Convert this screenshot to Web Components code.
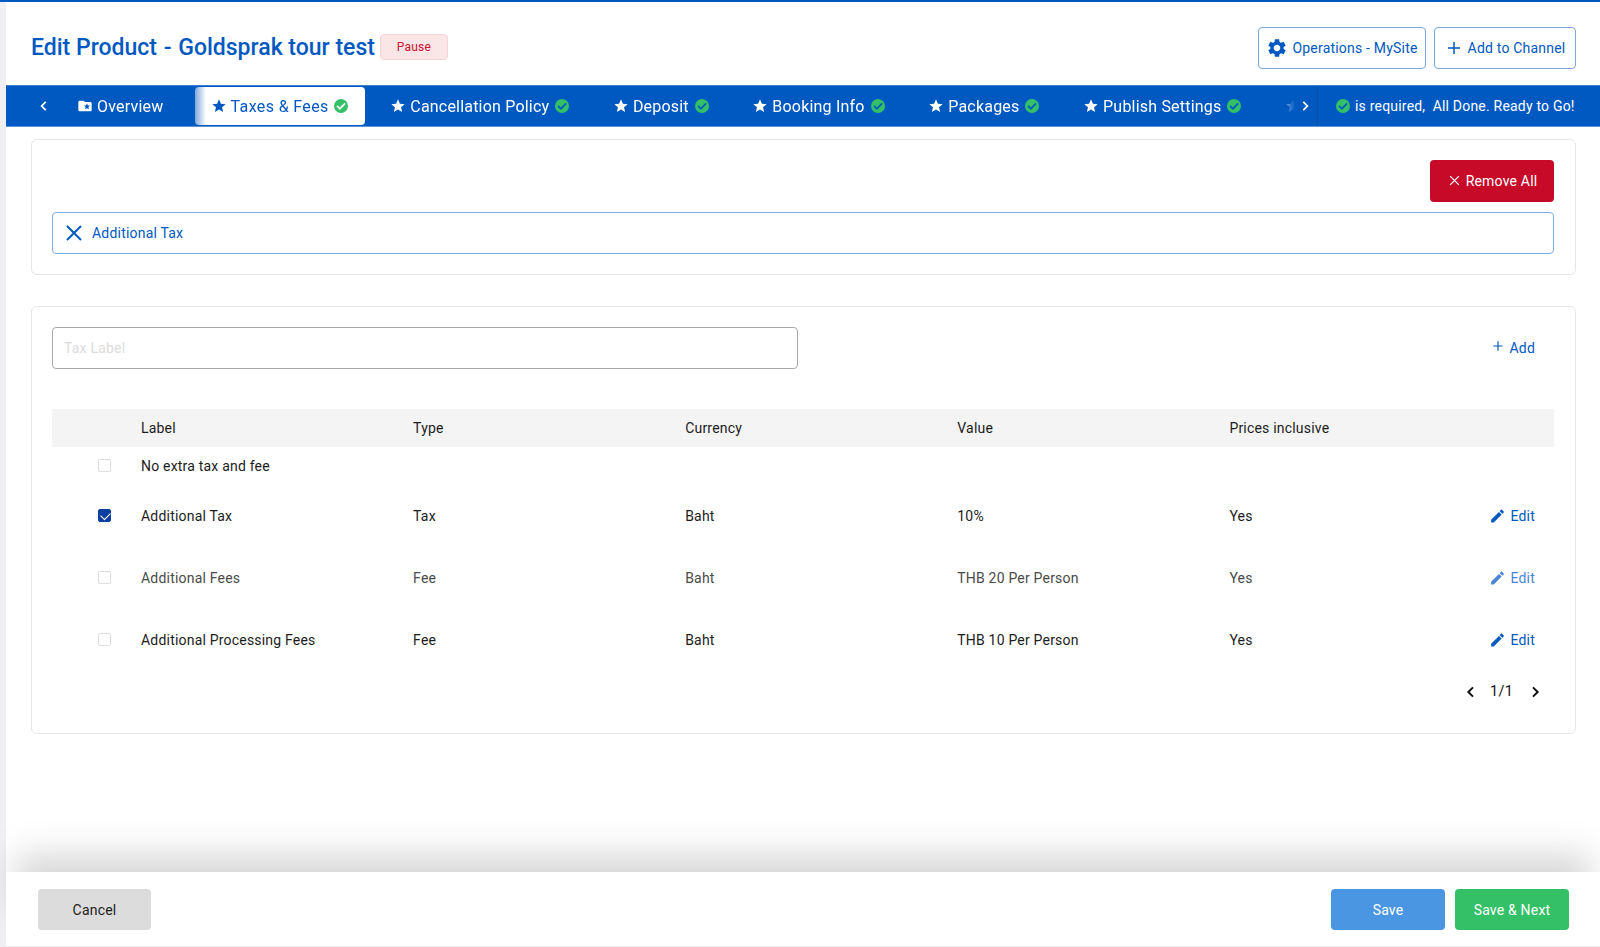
<!DOCTYPE html>
<html lang="en">
<head>
<meta charset="utf-8">
<title>Edit Product</title>
<style>
  * { box-sizing: border-box; }
  html, body { height: 100%; }
  body {
    margin: 0;
    height: 947px;
    overflow: hidden;
    border-top: 2px solid #0059c1;
    background: #f0f0f3;
    font-family: Roboto, "Liberation Sans", sans-serif;
    letter-spacing: .2px;
    color: #1c1c1c;
  }
</style>
</head>
<body>
<edit-page>
  <page-header slot="header" heading="Edit Product - Goldsprak tour test" status="Pause">
    <ui-button variant="outline" icon="gear" style="--w:168px">Operations - MySite</ui-button>
    <ui-button variant="outline" icon="plus" style="--w:142px">Add to Channel</ui-button>
  </page-header>

  <tab-bar slot="tabs" status="is required,&nbsp; All Done. Ready to Go!">
    <tab-item icon="folder" nocheck>Overview</tab-item>
    <tab-item active>Taxes &amp; Fees</tab-item>
    <tab-item>Cancellation Policy</tab-item>
    <tab-item>Deposit</tab-item>
    <tab-item>Booking Info</tab-item>
    <tab-item>Packages</tab-item>
    <tab-item>Publish Settings</tab-item>
    <tab-item nocheck></tab-item>
  </tab-bar>

  <ui-card style="--mt:12px">
    <div style="display:flex;justify-content:flex-end;margin-bottom:10px">
      <ui-button variant="danger" icon="close" style="--w:124px">Remove All</ui-button>
    </div>
    <chosen-tag>Additional Tax</chosen-tag>
  </ui-card>

  <ui-card style="--mt:31px">
    <tax-form placeholder="Tax Label"></tax-form>
    <tax-row head><span>Label</span><span>Type</span><span>Currency</span><span>Value</span><span>Prices inclusive</span></tax-row>
    <tax-row compact noedit><span>No extra tax and fee</span></tax-row>
    <tax-row checked><span>Additional Tax</span><span>Tax</span><span>Baht</span><span>10%</span><span>Yes</span></tax-row>
    <tax-row muted><span>Additional Fees</span><span>Fee</span><span>Baht</span><span>THB 20 Per Person</span><span>Yes</span></tax-row>
    <tax-row><span>Additional Processing Fees</span><span>Fee</span><span>Baht</span><span>THB 10 Per Person</span><span>Yes</span></tax-row>
    <table-pager>1/1</table-pager>
  </ui-card>

  <page-footer slot="footer">
    <ui-button slot="left" variant="grey" style="--w:113px;--h:41px">Cancel</ui-button>
    <ui-button variant="blue" style="--w:114px;--h:41px">Save</ui-button>
    <ui-button variant="green" style="--w:114px;--h:41px">Save &amp; Next</ui-button>
  </page-footer>
</edit-page>

<script>
const ICONS = {
  star: '<path d="M12 17.27L18.18 21l-1.64-6.97L22 9.24l-7.19-.61L12 2 9.19 8.63 2 9.24l5.46 4.73L5.82 21z"/>',
  folder: '<path d="M20 6h-8l-2-2H4c-1.1 0-1.99.9-1.99 2L2 18c0 1.1.9 2 2 2h16c1.1 0 2-.9 2-2V8c0-1.1-.9-2-2-2zm-2.06 11L15 15.28 12.06 17l.78-3.33-2.59-2.24 3.41-.29L15 8l1.34 3.13 3.41.29-2.59 2.24.78 3.34z"/>',
  check: '<path fill-rule="evenodd" d="M12 1.5a10.5 10.5 0 1 0 0 21 10.5 10.5 0 0 0 0-21zM10.3 17.9l-5.2-5.2 1.9-1.9 3.3 3.3 6.9-6.9 1.9 1.9z"/>',
  gear: '<path d="M19.14 12.94c.04-.3.06-.61.06-.94 0-.32-.02-.64-.07-.94l2.03-1.58c.18-.14.23-.41.12-.61l-1.92-3.32c-.12-.22-.37-.29-.59-.22l-2.39.96c-.5-.38-1.03-.7-1.62-.94l-.36-2.54c-.04-.24-.24-.41-.48-.41h-3.84c-.24 0-.43.17-.47.41l-.36 2.54c-.59.24-1.13.57-1.62.94l-2.39-.96c-.22-.08-.47 0-.59.22L2.74 8.87c-.12.21-.08.47.12.61l2.03 1.58c-.05.3-.09.63-.09.94s.02.64.07.94l-2.03 1.58c-.18.14-.23.41-.12.61l1.92 3.32c.12.22.37.29.59.22l2.39-.96c.5.38 1.03.7 1.62.94l.36 2.54c.05.24.24.41.48.41h3.84c.24 0 .44-.17.47-.41l.36-2.54c.59-.24 1.13-.56 1.62-.94l2.39.96c.22.08.47 0 .59-.22l1.92-3.32c.12-.22.07-.47-.12-.61l-2.01-1.58zM12 15.6c-1.98 0-3.6-1.62-3.6-3.6s1.62-3.6 3.6-3.6 3.6 1.62 3.6 3.6-1.62 3.6-3.6 3.6z"/>',
  plus: '<path d="M12 4v16M4 12h16" fill="none" stroke="currentColor" stroke-width="2"/>',
  close: '<path d="M5 5l14 14M19 5L5 19" fill="none" stroke="currentColor" stroke-width="2"/>',
  pencil: '<path d="M3 17.25V21h3.75L17.81 9.94l-3.75-3.75L3 17.25zM20.71 7.04c.39-.39.39-1.02 0-1.41l-2.34-2.34c-.39-.39-1.02-.39-1.41 0l-1.83 1.83 3.75 3.75 1.83-1.83z"/>',
  left: '<path d="M15 5l-7 7 7 7" fill="none" stroke="currentColor" stroke-width="3"/>',
  right: '<path d="M9 5l7 7-7 7" fill="none" stroke="currentColor" stroke-width="3"/>',
};

class UiIcon extends HTMLElement {
  constructor() {
    super();
    this.attachShadow({ mode: 'open' });
  }

  connectedCallback() {
    const size = this.getAttribute('size') || 16;
    this.shadowRoot.innerHTML = `
      <style>
        :host { display: inline-flex; flex: none; fill: currentColor; }
        svg { display: block; }
      </style>
      <svg width="${size}" height="${size}" viewBox="0 0 24 24">${ICONS[this.getAttribute('name')] || ''}</svg>
    `;
  }
}

class EditPage extends HTMLElement {
  constructor() {
    super();
    this.attachShadow({ mode: 'open' }).innerHTML = `
      <style>
        :host {
          display: flex;
          flex-direction: column;
          height: 945px;
          margin-left: 6px;
          background: #fff;
        }
        main { flex: 1; padding: 0 24px 0 25px; }
      </style>
      <slot name="header"></slot>
      <slot name="tabs"></slot>
      <main><slot></slot></main>
      <slot name="footer"></slot>
    `;
  }
}

class PageHeader extends HTMLElement {
  constructor() {
    super();
    this.attachShadow({ mode: 'open' });
  }

  connectedCallback() {
    const heading = this.getAttribute('heading').replace(' - ', ' <span class="dash">-</span> ');
    this.shadowRoot.innerHTML = `
      <style>
        :host {
          display: flex;
          align-items: center;
          height: 83px;
          padding: 25px 24px 16px 25px;
        }
        h1 {
          margin: -2px 0 0;
          font-size: 23px;
          font-weight: 500;
          letter-spacing: 0;
          color: #0059c1;
          white-space: nowrap;
        }
        .dash { padding: 0 1px; }
        .badge {
          display: flex;
          align-items: center;
          justify-content: center;
          width: 66px;
          height: 24px;
          margin: -2px 0 0 5px;
          border: 1px solid #f6d3d8;
          border-radius: 4px;
          background: #fae5e7;
          color: #c8102e;
          font-size: 12px;
        }
        .actions { display: flex; gap: 8px; margin-left: auto; }
      </style>
      <h1>${heading}</h1>
      <div class="badge">${this.getAttribute('status')}</div>
      <div class="actions"><slot></slot></div>
    `;
  }
}

class TabBar extends HTMLElement {
  constructor() {
    super();
    this.attachShadow({ mode: 'open' });
  }

  connectedCallback() {
    this.shadowRoot.innerHTML = `
      <style>
        * { box-sizing: border-box; }
        :host {
          display: flex;
          align-items: center;
          height: 41.5px;
          background: #0059c1;
          color: #fff;
          border-top: 1px solid #3b7fd0;
          border-bottom: 1px solid #5d93d6;
        }
        .arrow { display: flex; justify-content: center; flex: none; }
        .prev { width: 53px; padding-left: 23px; }
        .next { width: 22px; padding-right: 2px; }
        .track {
          display: flex;
          flex: none;
          gap: 7.6px;
          align-items: center;
          width: 1236px;
          height: 100%;
          overflow: hidden;
          -webkit-mask-image: linear-gradient(to right, #000 1215px, transparent 1236px);
          mask-image: linear-gradient(to right, #000 1215px, transparent 1236px);
        }
        .status {
          display: flex;
          align-items: center;
          gap: 4px;
          height: 100%;
          flex: 1;
          padding-left: 17px;
          border-left: 1px solid #0a4ea6;
          font-size: 14px;
          white-space: nowrap;
        }
        .status ui-icon { color: #33c067; }
      </style>
      <div class="arrow prev"><ui-icon name="left" size="14"></ui-icon></div>
      <div class="track"><slot></slot></div>
      <div class="arrow next"><ui-icon name="right" size="14"></ui-icon></div>
      <div class="status"><ui-icon name="check" size="16"></ui-icon><span>${this.getAttribute('status')}</span></div>
    `;
  }
}

class TabItem extends HTMLElement {
  constructor() {
    super();
    this.attachShadow({ mode: 'open' });
  }

  connectedCallback() {
    const icon = this.getAttribute('icon') || 'star';
    const check = this.hasAttribute('nocheck') ? '' : '<ui-icon class="ok" name="check" size="16"></ui-icon>';
    this.shadowRoot.innerHTML = `
      <style>
        :host {
          display: flex;
          flex: none;
          align-items: center;
          gap: 4px;
          height: 38px;
          margin-top: 1px;
          padding: 0 17px 0 18px;
          border-radius: 4px;
          font-size: 16px;
          white-space: nowrap;
        }
        :host([icon]) { margin-right: 3px; }
        :host([active]) {
          margin-left: 3.5px;
          padding: 0 16px 0 16px;
          letter-spacing: .37px;
          background: linear-gradient(to right, #7fa8de 0, #fff 11px);
          color: #0059c1;
        }
        .ok { color: #33c067; margin-left: 1px; }
        :host([active]) .ok { margin-left: 0; }
      </style>
      <ui-icon name="${icon}" size="16"></ui-icon>
      <slot></slot>
      ${check}
    `;
  }
}

class UiCard extends HTMLElement {
  constructor() {
    super();
    this.attachShadow({ mode: 'open' }).innerHTML = `
      <style>
        :host {
          display: block;
          margin-top: var(--mt, 0);
          padding: 20px 21px 20px 20px;
          border: 1px solid #e6e6e6;
          border-radius: 6px;
        }
      </style>
      <slot></slot>
    `;
  }
}

class UiButton extends HTMLElement {
  constructor() {
    super();
    this.attachShadow({ mode: 'open' });
  }

  connectedCallback() {
    const icon = this.getAttribute('icon');
    const size = { close: 15, gear: 22, plus: 18 }[icon];
    this.shadowRoot.innerHTML = `
      <style>
        :host {
          display: inline-flex;
          align-items: center;
          justify-content: center;
          gap: 5px;
          width: var(--w, auto);
          height: var(--h, 42px);
          border-radius: 4px;
          font-size: 14px;
          white-space: nowrap;
        }
        :host([variant="outline"]) { border: 1px solid #7da6de; color: #0059c1; }
        :host([icon="gear"]) { gap: 4px; }
        :host([variant="danger"]) { background: #c60a28; color: #fff; gap: 4px; }
        :host([variant="grey"]) { background: #dcdcdc; color: #1c1c1c; }
        :host([variant="blue"]) { background: #4a96e2; color: #fff; }
        :host([variant="green"]) { background: #33c067; color: #fff; }
      </style>
      ${icon ? `<ui-icon name="${icon}" size="${size}"></ui-icon>` : ''}
      <slot></slot>
    `;
  }
}

class ChosenTag extends HTMLElement {
  constructor() {
    super();
    this.attachShadow({ mode: 'open' }).innerHTML = `
      <style>
        :host {
          display: flex;
          align-items: center;
          gap: 6px;
          height: 42px;
          padding-left: 9px;
          border: 1px solid #7aaee8;
          border-radius: 4px;
          color: #0059c1;
          font-size: 14px;
        }
      </style>
      <ui-icon name="close" size="24"></ui-icon>
      <slot></slot>
    `;
  }
}

class TaxForm extends HTMLElement {
  constructor() {
    super();
    this.attachShadow({ mode: 'open' });
  }

  connectedCallback() {
    this.shadowRoot.innerHTML = `
      <style>
        * { box-sizing: border-box; }
        :host {
          display: flex;
          align-items: center;
          justify-content: space-between;
          margin-bottom: 40px;
        }
        .field {
          display: flex;
          align-items: center;
          width: 746px;
          height: 42px;
          padding-left: 11px;
          border: 1px solid #aaa;
          border-radius: 4px;
          color: #dcdcdc;
          font-size: 14px;
        }
        .add {
          display: flex;
          align-items: center;
          gap: 4px;
          padding-right: 19px;
          color: #0059c1;
          font-size: 14px;
        }
        .add ui-icon { margin-top: -4px; }
      </style>
      <div class="field">${this.getAttribute('placeholder')}</div>
      <div class="add"><ui-icon name="plus" size="14"></ui-icon><span>Add</span></div>
    `;
  }
}

class TaxRow extends HTMLElement {
  constructor() {
    super();
    this.attachShadow({ mode: 'open' });
  }

  connectedCallback() {
    const head = this.hasAttribute('head');
    const box = head ? '' : '<span class="box"></span>';
    const edit = head || this.hasAttribute('noedit')
      ? ''
      : '<span class="edit"><ui-icon name="pencil" size="17"></ui-icon>Edit</span>';
    this.shadowRoot.innerHTML = `
      <style>
        * { box-sizing: border-box; }
        :host {
          display: grid;
          grid-template-columns: 89px repeat(4, 272.1px) 1fr;
          align-items: center;
          position: relative;
          height: 62px;
          font-size: 14px;
          color: #1c1c1c;
        }
        :host([head]) { height: 38px; background: #f4f4f4; }
        :host([compact]) { height: 38px; }
        :host([muted]) { color: #4a4a4a; }
        .box {
          display: block;
          width: 13px;
          height: 13px;
          margin-left: 46px;
          border: 1px solid #dedede;
          border-radius: 2px;
          background: #fff;
        }
        :host([checked]) .box { background: #0b3f9f; border-color: #0b3f9f; }
        :host([checked]) .box::after {
          content: "";
          display: block;
          width: 8px;
          height: 5px;
          margin: 1.5px 0 0 1.5px;
          border-left: 1.6px solid #fff;
          border-bottom: 1.6px solid #fff;
          transform: rotate(-45deg);
        }
        ::slotted(span) { white-space: nowrap; }
        .spacer { grid-column: 1; }
        .edit {
          position: absolute;
          right: 19px;
          top: 50%;
          transform: translateY(-50%);
          display: flex;
          align-items: center;
          gap: 4px;
          color: #0059c1;
        }
        :host([muted]) .edit { color: #4a86d8; }
      </style>
      <span class="spacer">${box}</span>
      <slot></slot>
      ${edit}
    `;
  }
}

class TablePager extends HTMLElement {
  constructor() {
    super();
    this.attachShadow({ mode: 'open' }).innerHTML = `
      <style>
        :host {
          display: flex;
          align-items: center;
          justify-content: flex-end;
          gap: 11px;
          height: 42px;
          padding-right: 11px;
          font-size: 14.5px;
          color: #111;
        }
        .next { margin-left: 3px; }
      </style>
      <ui-icon name="left" size="16"></ui-icon>
      <slot></slot>
      <ui-icon class="next" name="right" size="16"></ui-icon>
    `;
  }
}

class PageFooter extends HTMLElement {
  constructor() {
    super();
    this.attachShadow({ mode: 'open' }).innerHTML = `
      <style>
        :host {
          display: flex;
          align-items: center;
          justify-content: space-between;
          height: 75px;
          padding: 1px 31px 0 32px;
          background: #fff;
          border-bottom: 1px solid #eee;
          box-shadow: 0 -27px 36px -10px rgba(0, 0, 0, .17);
          position: relative;
        }
        .right { display: flex; gap: 10px; }
      </style>
      <slot name="left"></slot>
      <div class="right"><slot></slot></div>
    `;
  }
}

customElements.define('ui-icon', UiIcon);
customElements.define('edit-page', EditPage);
customElements.define('page-header', PageHeader);
customElements.define('tab-bar', TabBar);
customElements.define('tab-item', TabItem);
customElements.define('ui-card', UiCard);
customElements.define('ui-button', UiButton);
customElements.define('chosen-tag', ChosenTag);
customElements.define('tax-form', TaxForm);
customElements.define('tax-row', TaxRow);
customElements.define('table-pager', TablePager);
customElements.define('page-footer', PageFooter);
</script>
</body>
</html>
